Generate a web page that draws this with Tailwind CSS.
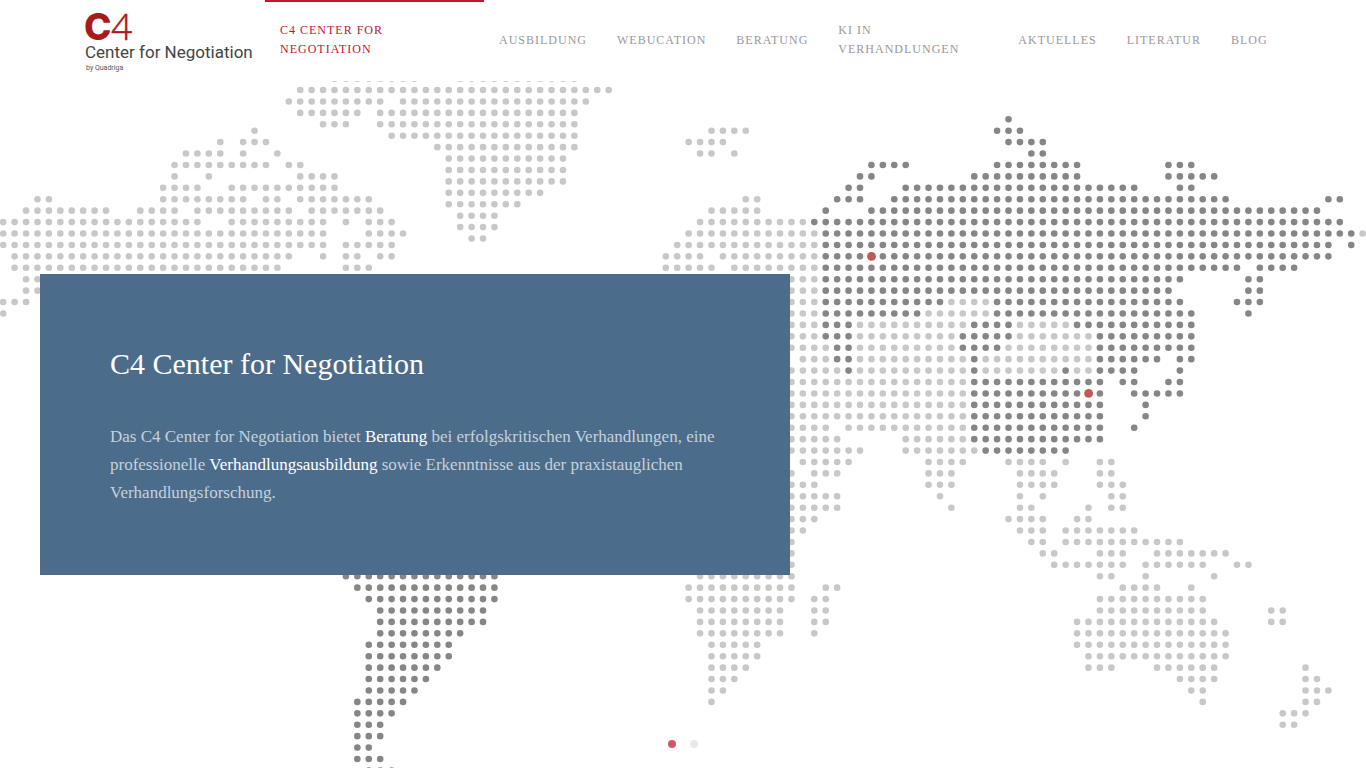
<!DOCTYPE html>
<html lang="de">

<head>
    <meta charset="UTF-8">
    <meta name="viewport" content="width=device-width, initial-scale=1.0">
    <title>C4 Center for Negotiation</title>
    <script src="https://cdn.jsdelivr.net/npm/@tailwindcss/browser@4"></script>
</head>

<body class="min-h-screen flex flex-col bg-white font-['Liberation_Serif',serif]">
    <!-- Navbar -->
    <header class="bg-white h-[81px] shrink-0">
        <div class="max-w-[1200px] h-20 mx-auto flex">
            <a class="w-[182px] shrink-0 flex items-center" href="#" aria-label="C4 Center for Negotiation">
                <svg class="w-[182px] h-20" viewBox="0 0 182 80">
                    <g fill="#a91b1b">
                        <text x="1" y="40" font-family="Inter, sans-serif" font-weight="800" font-size="37">C</text>
                        <text x="28" y="40" font-family="'Open Sans', sans-serif" font-weight="300" font-size="37" stroke="#a91b1b" stroke-width="0.5">4</text>
                    </g>
                    <text x="2" y="58" font-family="Roboto, sans-serif" font-size="17" fill="#444">Center for Negotiation</text>
                    <text x="3" y="70" font-family="Roboto, sans-serif" font-size="7" fill="#555">by Quadriga</text>
                </svg>
            </a>
            <nav class="flex flex-1 text-xs/[19px] tracking-[1px] uppercase text-[#999]">
                <a class="w-[219px] px-[15px] flex items-center shadow-[inset_0_2px_#be1633] text-[#be1633]" href="#"><span class="w-32">C4 Center for Negotiation</span></a>
                <a class="px-[15px] flex items-center hover:text-[#666]" href="#">Ausbildung</a>
                <a class="px-[15px] flex items-center hover:text-[#666]" href="#">Webucation</a>
                <a class="px-[15px] flex items-center hover:text-[#666]" href="#">Beratung</a>
                <a class="w-[180px] px-[15px] flex items-center hover:text-[#666]" href="#"><span class="w-32">KI in Verhandlungen</span></a>
                <a class="px-[15px] flex items-center hover:text-[#666]" href="#">Aktuelles</a>
                <a class="px-[15px] flex items-center hover:text-[#666]" href="#">Literatur</a>
                <a class="px-[15px] flex items-center hover:text-[#666]" href="#">Blog</a>
            </nav>
        </div>
    </header>

    <!-- Slider -->
    <main class="relative flex-1 flex items-center overflow-hidden">
        <svg class="absolute inset-0 w-full h-full" viewBox="0 81 1366 687" preserveAspectRatio="xMidYMid slice" fill="none" stroke-linecap="round">
            <g transform="translate(3.2 130.7) scale(11.424)" stroke-width="0.58" stroke-dasharray="0 1">
                <path id="map-light" stroke="#c8c8c8"></path>
                <path id="map-dark" stroke="#868686"></path>
            </g>
            <g fill="#c45656">
                <circle cx="871.5" cy="256.4" r="4.4"></circle>
                <circle cx="1088.6" cy="393.4" r="4.4"></circle>
            </g>
        </svg>

        <section class="relative w-[750px] mx-10 px-[70px] pt-[70px] pb-[68px] bg-[#4b6c8b]">
            <h1 class="text-3xl/10 text-white mb-[39px]">C4 Center for Negotiation</h1>
            <p class="text-[17px]/[28px] text-white/70">
                Das C4 Center for Negotiation bietet <a class="text-white" href="#">Beratung</a> bei erfolgskritischen
                Verhandlungen, eine professionelle <a class="text-white" href="#">Verhandlungsausbildung</a> sowie
                Erkenntnisse aus der praxistauglichen Verhandlungsforschung.
            </p>
        </section>

        <div class="absolute bottom-5 inset-x-0 flex justify-center gap-[14px]">
            <button class="size-2 rounded-full bg-[#d2596d]" type="button" aria-label="Slide 1"></button>
            <button class="size-2 rounded-full bg-[#e8e8e8]" type="button" aria-label="Slide 2"></button>
        </div>
    </main>

    <script>
        // Dotted world map: "row: from-to from-to ..." in grid columns
        const light = `
            0: 22 62-65
            1: 19 21-23 60-63
            2: 16-19 21 24 61-62 64
            3: 15-23 25-26
            4: 15 18 26-29
            5: 14-17 20-29
            6: 3-4 14-21 23-24 26-32 65-66
            7: 2-9 12-15 17-25 27-33 62-66
            8: 0-17 20-28 30 32-34 61-70
            9: 0-28 32-35 60-71 119
            10: 0-28 30-34 59-71
            11: 1-25 28 30-31 33-34 58-61 63-71
            12: 1-24 30-32 58-62 64-71
            13: 2-3 69-71
            14: 2-3 69-71
            15: 0-2 69-71 83-86
            16: 0 69-71 81-86
            17: 69-71 75-84 89-93
            18: 69-71 75-83 89-95
            19: 69-72 75-83 88-95
            20: 70-72 75-84 86-95
            21: 69-73 75-84 86-92 94-95
            22: 69-84
            23: 69-84
            24: 69-84
            25: 69-84
            26: 69-72 74-84
            27: 69-73 79-84
            28: 69-75 79-85
            29: 70-74 81-84 88-91 93 96-97
            30: 69 71-73 81-83 89-92 96-97
            31: 69-71 81-83 89-92 96-98
            32: 69-73 82 89 91 97-98
            33: 69-73 83 89-90 95 97-98
            34: 69-71 88-91 94-95
            35: 69-70 89-91 93-99
            36: 69 90-91 93-103
            37: 69 91-92 96-98 101-107
            38: 69 92-98 100-105 108-109
            39: 61-69 96-97 100 106
            40: 60-69 72-73 98-101 104
            41: 60-69 71-72 96-105
            42: 61-68 71-72 96-105 111-112
            43: 61-68 71-72 94-106 111-112
            44: 61-68 71 94-107
            45: 62-66 94-107
            46: 62-66 95-107
            47: 62-65 95-97 101-106 114
            48: 62-64 103-106 114-115
            49: 62-63 104-105 114-116
            50: 62 105 114-115
            51: 112-114
            52: 112-113`;

        // Greenland sits between the rows of the main grid
        const greenland = `
            -1: 29-36 40-50
            0: 26-53
            1: 25-33 35-51
            2: 26-31 33-50
            3: 28-30 33-50
            4: 34-50
            5: 38-50
            6: 39-49
            7: 39-49
            8: 39-49
            9: 39-47
            10: 39-45
            11: 40-43
            12: 40-43
            13: 41-42`;

        const dark = `
            -1: 88
            0: 87-89
            1: 88-91
            2: 90-91
            3: 76-79 87-94 102-104
            4: 75-76 85-94 102-106
            5: 74-75 79-99 103-104
            6: 73-75 78-107 116-117
            7: 72 76-115
            8: 71-117
            9: 72-118
            10: 72-116 118
            11: 72-116
            12: 72-108 110-113
            13: 72-103 109-110
            14: 72-102 109-110
            15: 72-82 87-103 108-110
            16: 72-80 87-104 109
            17: 72-74 85-88 94-104
            18: 72-74 84-88 96-104
            19: 73-74 84-87 96-104
            20: 73-74 85 96-101 103-104
            21: 74 85 93 96-99 103
            22: 85-96 98-99 102-103
            23: 85-96 99-103
            24: 85-96 100
            25: 85-96 100
            26: 85-96 99
            27: 85-96
            28: 86-93
            39: 30-43
            40: 31-43
            41: 32-43
            42: 33-42
            43: 33-42
            44: 33-40
            45: 32-39
            46: 32-39
            47: 32-38
            48: 32-37
            49: 32-36
            50: 31-35
            51: 31-34
            52: 31-33
            53: 31-33
            54: 31-32
            55: 31-33
            56: 32-34`;

        function toPath(rows, offset) {
            return rows.trim().split('\n').map(line => {
                const [row, runs] = line.trim().split(': ');
                return runs.split(' ').map(run => {
                    const [from, to = from] = run.split('-').map(Number);
                    return `M${from} ${Number(row) + offset}h${to - from + 0.4}`;
                }).join('');
            }).join('');
        }

        document.getElementById('map-light').setAttribute('d', toPath(light, 0) + toPath(greenland, -3.56));
        document.getElementById('map-dark').setAttribute('d', toPath(dark, 0));
    </script>
</body>

</html>
